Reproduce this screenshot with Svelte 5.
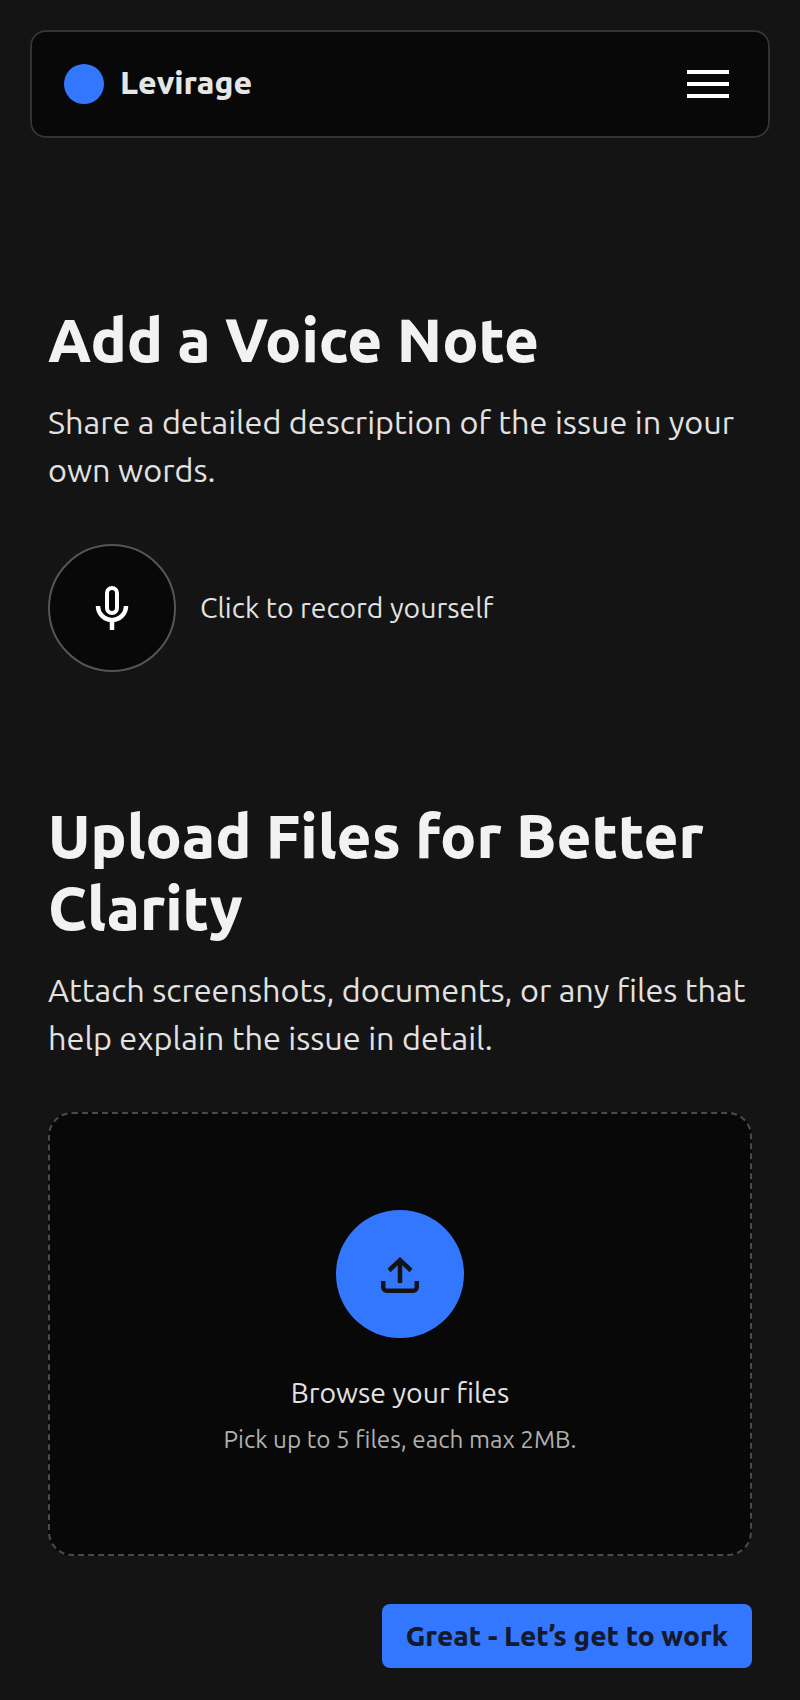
<script>
	const title = 'Levirage';
</script>

<div class="page">
	<header class="nav">
		<div class="brand">
			<span class="dot"></span>
			<span class="name">{title}</span>
		</div>
		<button class="menu" aria-label="Menu">
			<span></span>
			<span></span>
			<span></span>
		</button>
	</header>

	<main>
		<section class="voice">
			<h2>Add a Voice Note</h2>
			<p class="lead">Share a detailed description of the issue in your own words.</p>
			<div class="record">
				<button class="mic" aria-label="Record">
					<svg width="34" height="46" viewBox="0 0 34 46" fill="none" stroke="#fff" stroke-width="4.5">
						<rect x="12" y="3" width="10" height="25" rx="5" stroke-width="4" />
						<path d="M3 21a14 14 0 0 0 28 0" />
						<path d="M17 35v10" />
					</svg>
				</button>
				<span class="record-label">Click to record yourself</span>
			</div>
		</section>

		<section class="upload">
			<h2>Upload Files for Better Clarity</h2>
			<p class="lead">Attach screenshots, documents, or any files that help explain the issue in detail.</p>
			<div class="drop">
				<div class="circle">
					<svg width="40" height="40" viewBox="0 0 40 40" fill="none" stroke="#141414" stroke-width="4.5" stroke-linejoin="miter">
						<path d="M20 29V6" />
						<path d="M9 16.5 20 6l11 10.5" />
						<path d="M3.25 27v6.25a3.5 3.5 0 0 0 3.5 3.5h26.5a3.5 3.5 0 0 0 3.5-3.5V27" />
					</svg>
				</div>
				<div class="browse">Browse your files</div>
				<div class="hint">Pick up to 5 files, each max 2MB.</div>
			</div>
		</section>

		<div class="actions">
			<button class="cta">Great - Let’s get to work</button>
		</div>
	</main>
</div>

<style>
	:global(body) {
		margin: 0;
		background: #141414;
	}

	.page {
		height: 1700px;
		box-sizing: border-box;
		padding: 30px 30px 0;
		font-family: Ubuntu, "Noto Sans", "Open Sans", sans-serif;
		color: #f2f2f2;
	}

	.nav {
		height: 108px;
		box-sizing: border-box;
		display: flex;
		align-items: center;
		justify-content: space-between;
		padding: 0 39px 0 32px;
		background: #080808;
		border: 2px solid #333;
		border-radius: 16px;
	}

	.brand {
		display: flex;
		align-items: center;
		gap: 16px;
	}

	.dot {
		width: 40px;
		height: 40px;
		border-radius: 50%;
		background: #3377ff;
	}

	.name {
		font-size: 32px;
		line-height: 36px;
		font-weight: 800;
		color: #e6e6e6;
		margin-top: -5px;
	}

	.menu {
		display: flex;
		flex-direction: column;
		gap: 8.5px;
		width: 42px;
		padding: 0;
		background: none;
		border: 0;
	}

	.menu span {
		height: 3.5px;
		background: #fff;
	}

	main {
		padding: 0 18px;
	}

	.voice {
		margin-top: 165.5px;
	}

	.upload {
		margin-top: 127.5px;
	}

	h2 {
		margin: 0;
		font-size: 60px;
		line-height: 72px;
		font-weight: 800;
	}

	.lead {
		margin: 22.5px 0 0;
		font-size: 32.45px;
		line-height: 48px;
		color: #e2e2e2;
	}

	.record {
		display: flex;
		align-items: center;
		gap: 24px;
		margin-top: 50px;
		font-size: 28.4px;
		color: #e2e2e2;
	}

	.record-label {
		margin-top: -2px;
	}

	.mic {
		width: 128px;
		height: 128px;
		display: flex;
		align-items: center;
		justify-content: center;
		padding: 0;
		background: #080808;
		border: 2px solid #555;
		border-radius: 50%;
	}

	.drop {
		height: 444px;
		box-sizing: border-box;
		margin-top: 50px;
		padding-top: 96px;
		display: flex;
		flex-direction: column;
		align-items: center;
		background: #080808;
		border: 2px dashed #4a4a4a;
		border-radius: 24px;
	}

	.circle {
		width: 128px;
		height: 128px;
		border-radius: 50%;
		background: #3377ff;
		display: flex;
		align-items: center;
		justify-content: center;
	}

	.browse {
		margin-top: 33px;
		font-size: 28.4px;
		line-height: 44px;
		color: #e2e2e2;
	}

	.hint {
		margin-top: 2px;
		font-size: 24.3px;
		line-height: 44px;
		color: #b0b0b0;
	}

	.actions {
		display: flex;
		justify-content: flex-end;
		margin-top: 48px;
	}

	.cta {
		height: 64px;
		padding: 0 24px 2px;
		background: #3377ff;
		color: #141a2c;
		border: 0;
		border-radius: 8px;
		font-family: inherit;
		font-size: 28px;
		font-weight: 800;
	}
</style>
